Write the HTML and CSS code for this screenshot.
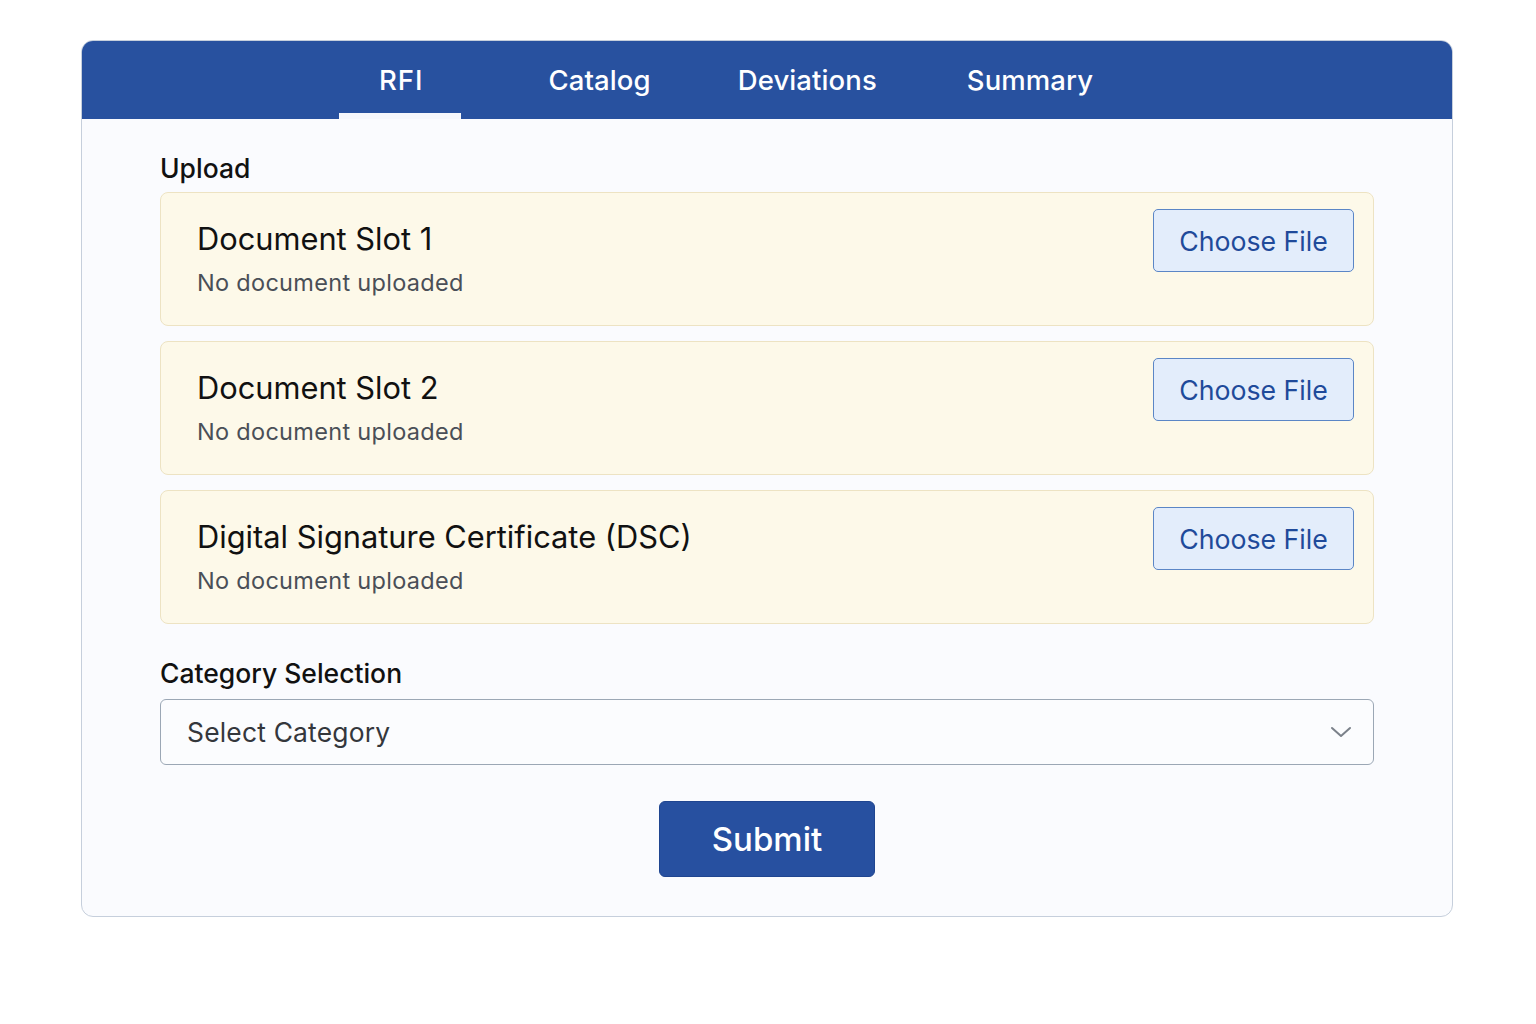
FILE: index.html
```html
<!DOCTYPE html>
<html lang="en">
<head>
<meta charset="utf-8">
<title>RFI Upload</title>
<link rel="stylesheet" href="styles.css">
</head>
<body>
<div class="page">
  <div class="panel">
    <nav class="tabs">
      <a class="tab active">RFI</a>
      <a class="tab">Catalog</a>
      <a class="tab">Deviations</a>
      <a class="tab">Summary</a>
    </nav>
    <main class="content">
      <h2 class="section-label">Upload</h2>
      <div class="slots">
        <div class="slot">
          <div class="slot-text">
            <div class="slot-title">Document Slot 1</div>
            <div class="slot-status">No document uploaded</div>
          </div>
          <button class="choose">Choose File</button>
        </div>
        <div class="slot">
          <div class="slot-text">
            <div class="slot-title">Document Slot 2</div>
            <div class="slot-status">No document uploaded</div>
          </div>
          <button class="choose">Choose File</button>
        </div>
        <div class="slot">
          <div class="slot-text">
            <div class="slot-title">Digital Signature Certificate (DSC)</div>
            <div class="slot-status">No document uploaded</div>
          </div>
          <button class="choose">Choose File</button>
        </div>
      </div>
      <h2 class="section-label category-label">Category Selection</h2>
      <div class="select">
        <span class="select-text">Select Category</span>
        <svg class="chevron" width="22" height="14" viewBox="0 0 22 14"><path d="M2 3 L11 11 L20 3" fill="none" stroke="#7b818a" stroke-width="2" stroke-linecap="round" stroke-linejoin="round"/></svg>
      </div>
      <div class="actions">
        <button class="submit">Submit</button>
      </div>
    </main>
  </div>
</div>
</body>
</html>
```
FILE: styles.css
```css
* { box-sizing: border-box; }
html, body { margin: 0; padding: 0; background: #ffffff; }
body { font-family: Inter, "Noto Sans", "Liberation Sans", sans-serif; color: #111; }
.page { padding: 40px 83px 0 81px; }
.panel {
  width: 1372px;
  border: 1px solid #c6cfdc;
  border-radius: 12px;
  background: #fafbfe;
  overflow: hidden;
}
.tabs {
  display: flex;
  height: 79px;
  background: #28519f;
  padding-left: 253px;
  margin: -1px -1px 0 -1px;
}
.tab {
  position: relative;
  display: flex;
  align-items: center;
  padding: 0 45px;
  color: #ffffff;
  font-size: 27.5px;
  font-weight: 500;
  letter-spacing: 0.1px;
}
.tab:first-child { margin-right: 35px; letter-spacing: 1px; }
.tab:nth-child(2) { margin-right: -3px; }
.tab.active::after {
  content: "";
  position: absolute;
  left: 5px; right: 8px; bottom: 0;
  height: 6px;
  background: #f5f7fc;
}
.content { padding: 33px 78px 39px 78px; }
.section-label {
  margin: 0 0 8px 0;
  font-size: 26.5px;
  line-height: 32px;
  font-weight: 500;
  color: #111;
}
.slots { display: flex; flex-direction: column; gap: 15px; }
.slot {
  display: flex;
  justify-content: space-between;
  align-items: flex-start;
  height: 134px;
  padding: 16px 19px 0 36px;
  background: #fdf9e9;
  border: 1px solid #ede3c3;
  border-radius: 8px;
}
.slot-text { padding-top: 12px; }
.slot-title { font-size: 30.8px; line-height: 36px; font-weight: 400; color: #111; }
.slot-status { margin-top: 11px; font-size: 23.5px; line-height: 30px; color: #4a4f57; letter-spacing: 0.3px; }
.choose {
  width: 201px;
  height: 63px;
  background: #e3edfb;
  border: 1px solid #5b86c6;
  border-radius: 5px;
  color: #1f4a9a;
  font-family: inherit;
  font-size: 26.7px;
  font-weight: 400;
  padding: 0;
}
.category-label { margin-top: 33px; margin-bottom: 10px; }
.select {
  display: flex;
  align-items: center;
  justify-content: space-between;
  height: 66px;
  padding: 0 21px 0 26px;
  border: 1px solid #9ba7b5;
  border-radius: 6px;
  background: #fbfcfe;
}
.select-text { font-size: 26.4px; color: #34373c; letter-spacing: 0.2px; }
.chevron { display: block; }
.actions { display: flex; justify-content: center; margin-top: 36px; }
.submit {
  width: 216px;
  height: 76px;
  background: #2750a0;
  border: 1px solid #1f4590;
  border-radius: 6px;
  color: #ffffff;
  font-family: inherit;
  font-size: 33px;
  font-weight: 500;
  padding: 0;
}
```
